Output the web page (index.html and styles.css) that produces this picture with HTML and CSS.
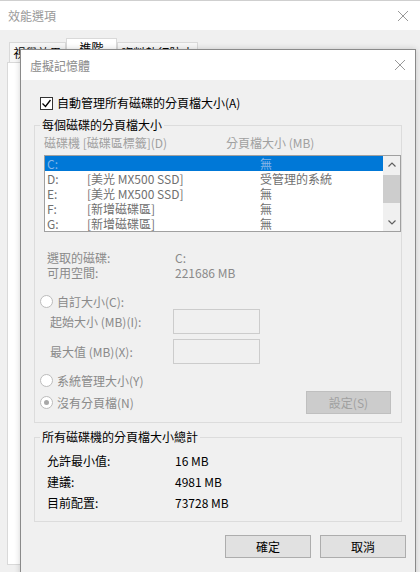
FILE: index.html
```html
<!DOCTYPE html>
<html lang="zh-Hant">

<head>
    <meta charset="UTF-8">
    <meta name="viewport" content="width=device-width, initial-scale=1.0">
    <title>虛擬記憶體</title>
    <link rel="stylesheet" href="styles.css">
</head>

<body>
    <!-- 背後的效能選項視窗 -->
    <div class="perf-window">
        <div class="titlebar">
            <span class="title">效能選項</span>
            <svg class="close" width="10" height="10" viewBox="0 0 10 10">
                <path d="M0 0 L10 10 M10 0 L0 10" />
            </svg>
        </div>
        <div class="tabs">
            <div class="tab tab-visual">視覺效果</div>
            <div class="tab tab-adv active">進階</div>
            <div class="tab tab-dep">資料執行防止</div>
        </div>
        <div class="tab-panel"></div>
    </div>

    <!-- 虛擬記憶體對話方塊 -->
    <div class="vm-dialog">
        <div class="dlg-titlebar">
            <span class="dlg-title">虛擬記憶體</span>
            <svg class="close" width="10" height="10" viewBox="0 0 10 10">
                <path d="M0 0 L10 10 M10 0 L0 10" />
            </svg>
        </div>

        <div class="check-row">
            <span class="checkbox">
                <svg width="11" height="11" viewBox="0 0 11 11">
                    <path d="M1.5 5.5 L4.5 8.5 L9.5 2" />
                </svg>
            </span>
            <span>自動管理所有磁碟的分頁檔大小(A)</span>
        </div>

        <fieldset class="group">
            <legend>每個磁碟的分頁檔大小</legend>

            <div class="col-heads">
                <span class="head-drive">磁碟機 [磁碟區標籤](D)</span>
                <span>分頁檔大小 (MB)</span>
            </div>

            <div class="drive-list">
                <div class="rows">
                    <div class="drive-row selected"><span>C:</span><span></span><span>無</span></div>
                    <div class="drive-row"><span>D:</span><span>[美光 MX500 SSD]</span><span>受管理的系統</span></div>
                    <div class="drive-row"><span>E:</span><span>[美光 MX500 SSD]</span><span>無</span></div>
                    <div class="drive-row"><span>F:</span><span>[新增磁碟區]</span><span>無</span></div>
                    <div class="drive-row"><span>G:</span><span>[新增磁碟區]</span><span>無</span></div>
                </div>
                <div class="scrollbar">
                    <div class="sb-btn">
                        <svg width="8" height="5" viewBox="0 0 8 5"><path d="M0.5 4.5 L4 1 L7.5 4.5" /></svg>
                    </div>
                    <div class="sb-thumb"></div>
                    <div class="sb-space"></div>
                    <div class="sb-btn">
                        <svg width="8" height="5" viewBox="0 0 8 5"><path d="M0.5 0.5 L4 4 L7.5 0.5" /></svg>
                    </div>
                </div>
            </div>

            <div class="drive-info">
                <span>選取的磁碟:</span><span>C:</span>
                <span>可用空間:</span><span>221686 MB</span>
            </div>

            <div class="radio-row first">
                <span class="radio"></span>
                <span>自訂大小(C):</span>
            </div>
            <div class="size-row">
                <span class="size-label">起始大小 (MB)(I):</span>
                <input class="size-input" type="text" disabled>
            </div>
            <div class="size-row second">
                <span class="size-label">最大值 (MB)(X):</span>
                <input class="size-input" type="text" disabled>
            </div>
            <div class="radio-row system">
                <span class="radio"></span>
                <span>系統管理大小(Y)</span>
            </div>
            <div class="last-row">
                <div class="radio-row none">
                    <span class="radio checked"></span>
                    <span>沒有分頁檔(N)</span>
                </div>
                <button class="btn btn-set" disabled>設定(S)</button>
            </div>
        </fieldset>

        <fieldset class="group totals">
            <legend>所有磁碟機的分頁檔大小總計</legend>
            <div class="total-grid">
                <span>允許最小值:</span><span>16 MB</span>
                <span>建議:</span><span>4981 MB</span>
                <span>目前配置:</span><span>73728 MB</span>
            </div>
        </fieldset>

        <div class="buttons">
            <button class="btn">確定</button>
            <button class="btn">取消</button>
        </div>
    </div>
</body>

</html>
```

FILE: styles.css
```css
* {
    box-sizing: border-box;
}

body {
    margin: 0;
    width: 420px;
    height: 572px;
    overflow: hidden;
    position: relative;
    background: #f0f0f0;
    font-family: "Noto Sans CJK TC", sans-serif;
    font-size: 12px;
    color: #000;
}

.close path {
    stroke: #999;
    stroke-width: 1;
    fill: none;
}

/* 效能選項 */

.perf-window {
    height: 572px;
    display: flex;
    flex-direction: column;
    border-top: 1px solid #cfcfcf;
}

.titlebar {
    height: 29px;
    background: #fff;
    display: flex;
    align-items: center;
    justify-content: space-between;
    padding: 0 12px 0 8px;
}

.title {
    color: #999;
}

.tabs {
    height: 32px;
    display: flex;
    align-items: flex-end;
    padding-left: 9px;
}

.tab {
    height: 20px;
    line-height: 20px;
    text-align: center;
    background: #f7f7f7;
    border: 1px solid #d9d9d9;
    border-bottom: none;
}

.tab-visual {
    width: 57px;
}

.tab-adv {
    width: 51px;
}

.tab-dep {
    width: 81px;
}

.tab.active {
    height: 24px;
    line-height: 18px;
    background: #fff;
}

.tab-panel {
    flex: 1;
    margin: 0 7px 7px 7px;
    background: #fff;
    border: 1px solid #d9d9d9;
}

/* 虛擬記憶體 */

.vm-dialog {
    position: absolute;
    left: 20px;
    top: 49px;
    width: 396px;
    height: 540px;
    background: #f0f0f0;
    border: 1px solid #8a8a8a;
    box-shadow: 0 0 6px rgba(0, 0, 0, 0.18);
}

.dlg-titlebar {
    height: 30px;
    background: #fff;
    display: flex;
    align-items: center;
    justify-content: space-between;
    padding: 0 10px 0 9px;
}

.dlg-title {
    color: #8c8c8c;
}

.check-row {
    display: flex;
    align-items: center;
    gap: 4px;
    height: 16px;
    line-height: 16px;
    margin: 15px 0 0 19px;
}

.checkbox {
    width: 13px;
    height: 13px;
    border: 1px solid #333;
    background: #fff;
    display: flex;
    align-items: center;
    justify-content: center;
}

.checkbox path {
    stroke: #000;
    stroke-width: 1.3;
    fill: none;
}

.group {
    margin: 6px 13px 0 13px;
    padding: 0 0 8px 0;
    border: 1px solid #dcdcdc;
    min-width: 0;
}

.group legend {
    margin-left: 5px;
    padding: 0 2px;
    height: 16px;
    line-height: 16px;
}

.col-heads {
    display: flex;
    height: 16px;
    line-height: 16px;
    margin: 2px 0 0 9px;
    color: #a0a0a0;
}

.head-drive {
    width: 182px;
}

.drive-list {
    display: flex;
    height: 77px;
    margin: 4px 0 0 9px;
    border: 1px solid #a0a0a0;
    background: #fff;
}

.rows {
    flex: 1;
}

.drive-row {
    display: grid;
    grid-template-columns: 40px 173px 1fr;
    height: 15px;
    line-height: 15px;
    padding-left: 2px;
    color: #707070;
    white-space: nowrap;
}

.drive-row.selected {
    background: #0078d7;
    color: #86b6e8;
}

.scrollbar {
    width: 17px;
    display: flex;
    flex-direction: column;
    background: #f0f0f0;
}

.sb-btn {
    height: 17px;
    display: flex;
    align-items: center;
    justify-content: center;
}

.sb-btn path {
    stroke: #606060;
    stroke-width: 1.2;
    fill: none;
}

.sb-thumb {
    height: 28px;
    margin-top: 2px;
    background: #cdcdcd;
}

.sb-space {
    flex: 1;
}

.drive-info {
    display: grid;
    grid-template-columns: 128px auto;
    line-height: 15px;
    margin: 18px 0 0 12px;
    color: #8a8a8a;
}

.radio-row {
    display: flex;
    align-items: center;
    gap: 4px;
    height: 15px;
    margin-left: 5px;
    color: #8a8a8a;
}

.radio-row.first {
    margin-top: 14px;
}

.radio-row.system {
    margin-top: 9px;
}

.radio {
    width: 13px;
    height: 13px;
    border: 1px solid #bcbcbc;
    border-radius: 50%;
    background: #fff;
    display: flex;
    align-items: center;
    justify-content: center;
}

.radio.checked::after {
    content: "";
    width: 5px;
    height: 5px;
    border-radius: 50%;
    background: #a8a8a8;
}

.size-row {
    display: flex;
    align-items: center;
    height: 25px;
    margin-left: 15px;
    color: #8a8a8a;
}

.size-row.second {
    margin-top: 5px;
}

.size-label {
    width: 123px;
}

.size-input {
    width: 87px;
    height: 25px;
    margin: 0;
    border: 1px solid #cccccc;
    background: #f0f0f0;
}

.last-row {
    display: flex;
    align-items: center;
    justify-content: space-between;
    height: 23px;
    margin: 3px 10px 0 0;
}

.btn {
    width: 86px;
    height: 23px;
    margin: 0;
    padding: 0;
    font-family: inherit;
    font-size: 12px;
    color: #000;
    background: #e1e1e1;
    border: 1px solid #adadad;
}

.btn-set {
    width: 85px;
    background: #cccccc;
    border-color: #bfbfbf;
    color: #a0a0a0;
}

.total-grid {
    display: grid;
    grid-template-columns: 128px auto;
    grid-auto-rows: 21px;
    align-items: center;
    margin: 5px 0 0 12px;
}

.buttons {
    display: flex;
    justify-content: flex-end;
    gap: 9px;
    margin-top: 13px;
    padding-right: 9px;
}
```
